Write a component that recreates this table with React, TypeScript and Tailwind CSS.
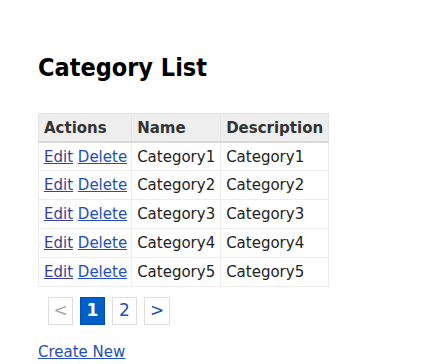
const rows = [1, 2, 3, 4, 5].map((n) => ({
  id: n,
  name: `Category${n}`,
  description: `Category${n}`,
}));

const App = () => {
  return (
    <div
      className="min-h-[364px] bg-white pl-[38px] pt-[52px] text-[#222]"
      style={{ fontFamily: '"DejaVu Sans", Verdana, sans-serif' }}
    >
      <h1
        className="text-[25px] font-bold leading-[32px] text-black"
        style={{ fontFamily: '"DejaVu Sans Condensed", "DejaVu Sans", sans-serif' }}
      >
        Category List
      </h1>

      <table className="mt-[29px] border-collapse text-[15px]">
        <thead>
          <tr className="bg-[#eeeeee]">
            <th className="h-[28px] w-[93px] border border-[#e4e4e4] border-b-2 border-b-[#d8d8d8] px-[5px] pt-[1px] text-left font-bold text-[#333]">
              Actions
            </th>
            <th className="w-[89px] border border-[#e4e4e4] border-b-2 border-b-[#d8d8d8] px-[5px] pt-[1px] text-left font-bold text-[#333]">
              Name
            </th>
            <th className="w-[105px] border border-[#e4e4e4] border-b-2 border-b-[#d8d8d8] px-[5px] pt-[1px] text-left font-bold text-[#333]">
              Description
            </th>
          </tr>
        </thead>
        <tbody>
          {rows.map((row) => (
            <tr key={row.id}>
              <td className="h-[29px] border border-[#ececec] pl-[5px] pr-[4px] pt-[1px] whitespace-nowrap">
                <a href="#" className="text-[#3b3f9a] underline">
                  Edit
                </a>{" "}
                <a href="#" className="text-[#2350b8] underline">
                  Delete
                </a>
              </td>
              <td className="border border-[#ececec] pl-[5px] pr-[4px] pt-[1px]">{row.name}</td>
              <td className="border border-[#ececec] pl-[5px] pr-[4px] pt-[1px]">
                {row.description}
              </td>
            </tr>
          ))}
        </tbody>
      </table>

      <div className="mt-[10px] ml-[10px] flex gap-[7px] text-[17px]">
        <span className="flex h-[28px] w-[25px] items-center justify-center border border-[#dddddd] text-[#aaaaaa]">
          &lt;
        </span>
        <span className="flex h-[28px] w-[25px] items-center justify-center border border-[#0050b0] bg-[#0060c8] font-bold text-white">
          1
        </span>
        <a
          href="#"
          className="flex h-[28px] w-[25px] items-center justify-center border border-[#dddddd] text-[#2350b8]"
        >
          2
        </a>
        <a
          href="#"
          className="flex h-[28px] w-[26px] items-center justify-center border border-[#dddddd] text-[#2350b8]"
        >
          &gt;
        </a>
      </div>

      <div className="mt-[16px] text-[15px]">
        <a href="#" className="text-[#2350b8] underline">
          Create New
        </a>
      </div>
    </div>
  );
};

export default App;
